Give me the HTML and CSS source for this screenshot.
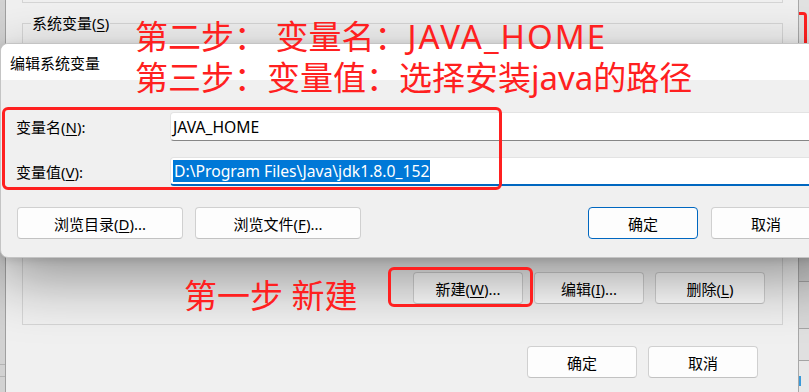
FILE: index.html
```html
<!DOCTYPE html>
<html lang="zh-CN">
<head>
    <meta charset="UTF-8">
    <meta name="viewport" content="width=device-width, initial-scale=1.0">
    <title>编辑系统变量</title>
    <link rel="stylesheet" href="styles.css">
</head>
<body>
    <div class="desk">
        <div class="side side-left">
            <div class="side-line"></div>
            <div class="side-line"></div>
        </div>

        <div class="env-window">
            <div class="group-user"></div>
            <fieldset class="group-sys">
                <legend>系统变量(<u>S</u>)</legend>
                <div class="var-list"></div>
                <div class="sys-actions">
                    <button class="btn">新建(<u>W</u>)...</button>
                    <button class="btn">编辑(<u>I</u>)...</button>
                    <button class="btn">删除(<u>L</u>)</button>
                </div>
            </fieldset>
            <div class="env-footer">
                <button class="btn">确定</button>
                <button class="btn">取消</button>
            </div>
        </div>

        <div class="side side-right">
            <div class="mark-corner"></div>
            <div class="strip-row strip-dark"></div>
            <div class="strip-row strip-mid"></div>
            <div class="strip-row strip-light"></div>
            <div class="strip-row strip-last"><span class="strip-blue"></span></div>
        </div>
    </div>

    <div class="dialog">
        <div class="dialog-title">编辑系统变量</div>
        <div class="dialog-body">
            <div class="field-row">
                <label class="field-label">变量名(<u>N</u>):</label>
                <div class="field-input">JAVA_HOME</div>
            </div>
            <div class="field-row">
                <label class="field-label">变量值(<u>V</u>):</label>
                <div class="field-input focused"><span class="selected">D:\Program Files\Java\jdk1.8.0_152</span></div>
            </div>
            <div class="dialog-actions">
                <button class="btn btn-wide">浏览目录(<u>D</u>)...</button>
                <button class="btn btn-wide">浏览文件(<u>F</u>)...</button>
                <button class="btn btn-default">确定</button>
                <button class="btn">取消</button>
            </div>
        </div>
        <div class="mark-box mark-fields"></div>
    </div>

    <div class="mark-box mark-new"></div>
    <div class="note note-name">第二步： 变量名：<span class="latin">JAVA_HOME</span></div>
    <div class="note note-value">第三步：变量值：选择安装java的路径</div>
    <div class="note note-new">第一步 新建</div>
</body>
</html>
```

FILE: styles.css
```css
body {
    margin: 0;
    width: 809px;
    height: 392px;
    overflow: hidden;
    position: relative;
    font-family: "Noto Sans", "Noto Sans CJK SC", sans-serif;
    font-size: 15px;
    color: #000;
    background: #d6d6d6;
}
u {
    text-decoration-thickness: 1px;
    text-underline-offset: 2px;
}
.desk {
    display: flex;
    height: 392px;
}

/* windows behind */
.side-left {
    width: 5px;
    background: #d2d2d2;
    padding-top: 364px;
    box-sizing: border-box;
}
.side-line {
    height: 11px;
    border-top: 1px solid #b4b4b4;
}
.side-right {
    width: 10px;
    background: #e2e2e2;
    display: flex;
    flex-direction: column;
}
.mark-corner {
    margin-top: 12px;
    width: 5px;
    height: 40px;
    border-top: 3px solid #ff2020;
    border-right: 3px solid #ff2020;
    border-top-right-radius: 4px;
}
.strip-row {
    border-top: 1px solid #a4a4a4;
}
.strip-dark { height: 226px; background: #cfcfcf; border-top: none; }
.strip-mid { height: 46px; background: #d8d8d8; }
.strip-light { height: 31px; background: #e0e0e0; }
.strip-last { flex: 1; background: #e8e8e8; position: relative; }
.strip-blue {
    position: absolute;
    left: 0;
    top: 15px;
    width: 2px;
    height: 10px;
    background: #3a9ad9;
}

.env-window {
    width: 794px;
    box-sizing: border-box;
    background: #f0f0f0;
    border-left: 1px solid #a0a0a0;
    border-right: 1px solid #a8a8a8;
    padding: 0 15px 0 16px;
}
.group-user {
    height: 2px;
    border: 1px solid #d5d5d5;
    border-top: none;
}
.group-sys {
    margin: 10px 0 0;
    padding: 0 17px 20px 8px;
    border: 1px solid #d5d5d5;
    min-width: 0;
}
.group-sys legend {
    padding: 0 1px;
    line-height: 20px;
}
.var-list {
    height: 239px;
}
.sys-actions {
    display: flex;
    justify-content: flex-end;
    gap: 11px;
}
.env-footer {
    display: flex;
    justify-content: flex-end;
    gap: 11px;
    margin-top: 21px;
    padding-right: 25px;
}

.btn {
    width: 110px;
    height: 32px;
    box-sizing: border-box;
    padding: 0;
    font-family: inherit;
    font-size: 15px;
    color: #000;
    background: #fdfdfd;
    border: 1px solid #d0d0d0;
    border-bottom-color: #c2c2c2;
    border-radius: 4px;
}
.btn-wide { width: 166px; }
.btn-default {
    border-color: #0067c0;
    margin-left: auto;
}

/* edit dialog */
.dialog {
    position: absolute;
    left: 0;
    top: 43px;
    width: 837px;
    box-sizing: border-box;
    background: #f0f0f0;
    border: 1px solid #c4c4c4;
    border-radius: 8px;
    box-shadow: 0 20px 60px rgba(0, 0, 0, 0.4), 0 2px 8px rgba(0, 0, 0, 0.12);
    z-index: 2;
}
.dialog-title {
    height: 36px;
    display: flex;
    align-items: center;
    padding-left: 9px;
    background: #fff;
    border-radius: 7px 7px 0 0;
}
.dialog-body {
    padding: 32px 15px 18px;
}
.field-row {
    display: flex;
    align-items: center;
    height: 29px;
}
.field-row + .field-row {
    margin-top: 16px;
}
.field-label {
    width: 154px;
    flex: none;
}
.field-input {
    flex: 1;
    height: 29px;
    box-sizing: border-box;
    background: #fff;
    border: 1px solid #e3e3e3;
    border-bottom: 1px solid #868686;
    border-radius: 4px;
    padding-left: 2px;
    display: flex;
    align-items: center;
    font-size: 15.7px;
}
.field-input.focused {
    border-bottom: 2px solid #0067c0;
}
.selected {
    background: #0078d7;
    color: #fff;
    line-height: 22px;
    padding: 0 1px;
}
.dialog-actions {
    display: flex;
    gap: 12px;
    margin-top: 21px;
    padding-left: 1px;
}
.dialog-actions .btn-default + .btn {
    margin-left: 1px;
}

/* red annotations */
.mark-box {
    position: absolute;
    border: 3px solid #ff2020;
    border-radius: 6px;
    box-sizing: border-box;
}
.mark-fields {
    left: 1px;
    top: 63px;
    width: 500px;
    height: 83px;
}
.mark-new {
    left: 388px;
    top: 267px;
    width: 145px;
    height: 40px;
    z-index: 3;
}
.note {
    position: absolute;
    color: #ff2020;
    font-size: 33px;
    line-height: 40px;
    white-space: nowrap;
    z-index: 3;
}
.note .latin {
    letter-spacing: 2px;
}
.note-name { left: 135px; top: 17px; }
.note-value { left: 135px; top: 58px; }
.note-new { left: 184px; top: 276px; }
```
